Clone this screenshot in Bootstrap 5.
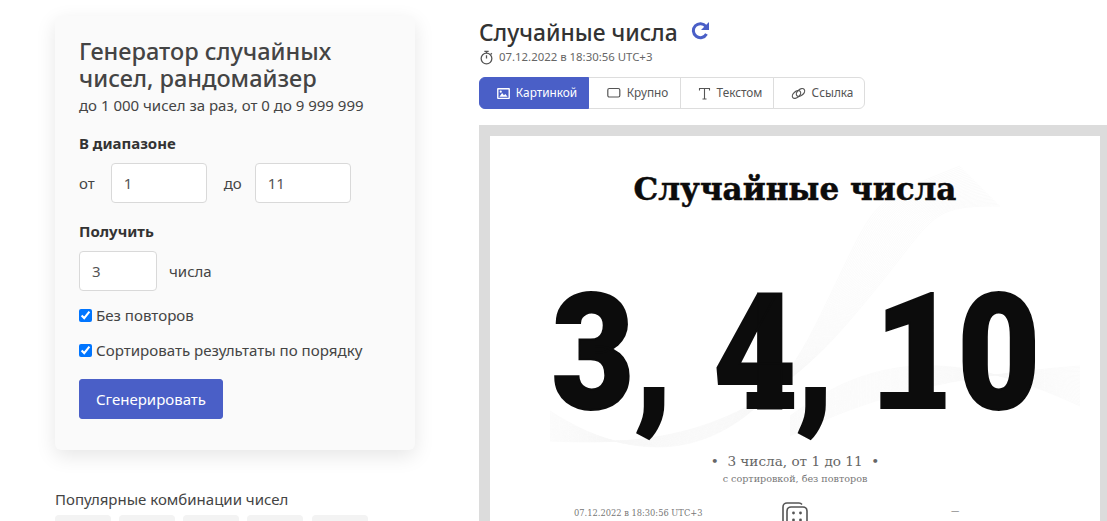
<!DOCTYPE html>
<html lang="ru">
<head>
    <meta charset="UTF-8">
    <meta name="viewport" content="width=device-width, initial-scale=1.0">
    <title>Случайные числа</title>
    <link href="https://cdn.jsdelivr.net/npm/bootstrap@5.3.0/dist/css/bootstrap.min.css" rel="stylesheet">
    <style>
        html, body {
            height: 521px;
            overflow: hidden;
        }
        body {
            font-family: "Noto Sans", sans-serif;
            font-size: 15px;
            color: #444;
            background: #fff;
        }
        .page-wrap {
            display: flex;
            padding: 16px 0 0 55px;
        }
        .side-col {
            width: 360px;
            flex: none;
        }
        .main-col {
            width: 628px;
            flex: none;
            margin-left: 64px;
            padding-top: 2px;
        }
        .gen-box {
            background: #fafafa;
            border: 0;
            border-radius: 6px;
            padding: 22px 24px 24px;
            height: 434px;
            box-shadow: 0 6px 20px rgba(0, 0, 0, .1);
        }
        .gen-title {
            font-size: 23.5px;
            line-height: 27px;
            font-weight: 500;
            color: #444;
            margin: 0;
        }
        .gen-sub {
            font-size: 15px;
            line-height: 22px;
            margin: 2px 0 16px;
        }
        .gen-label {
            font-size: 15px;
            line-height: 22px;
            font-weight: 700;
            color: #333;
            margin-bottom: 9px;
        }
        .gen-row {
            margin-bottom: 17px;
        }
        .gen-input {
            height: 40px;
            padding: 0 12px;
            font-size: 15px;
            color: #555;
            border: 1px solid #d9d9d9;
            border-radius: 4px;
            background: #fff;
        }
        .w-range { width: 96px; }
        .w-count { width: 78px; }
        .gap-do { margin: 0 13px 0 17px; }
        .gen-check {
            display: flex;
            align-items: center;
            gap: 4px;
            line-height: 22px;
            font-size: 15.1px;
        }
        .gen-check input {
            width: 13px;
            height: 13px;
            margin: 0;
        }
        .check-first { margin-top: 13px; }
        .check-second { margin-top: 13px; }
        .gen-btn {
            background: #4a5fc7;
            border-color: #4a5fc7;
            color: #fff;
            font-size: 15px;
            height: 40px;
            width: 144px;
            padding: 0;
            margin-top: 18px;
            border-radius: 3px;
        }
        .combo-title {
            font-size: 15px;
            line-height: 22px;
            margin: 38px 0 5px;
        }
        .combo-chip {
            display: block;
            width: 56px;
            height: 30px;
            background: #f3f3f3;
            border-radius: 4px;
        }
        .combo-chip:last-child { margin-left: 1px; }
        .res-title {
            font-size: 22.8px;
            line-height: 30px;
            font-weight: 500;
            color: #333;
            margin: 0;
        }
        .res-reload { margin-left: 12px; margin-top: -4px; }
        .res-time {
            font-size: 11.4px;
            line-height: 16px;
            color: #666;
            margin-top: 1px;
        }
        .res-time span { margin-left: 1px; }
        .tab-group { margin-top: 12px; }
        .tab-group .btn {
            height: 32px;
            padding: 0 0 0 6px;
            font-size: 11.8px;
            color: #555;
            background: #fff;
            border-color: #ddd;
            display: flex;
            align-items: center;
            justify-content: center;
            gap: 6px;
        }
        .tab-group .btn.active {
            background: #4a5fc7;
            border-color: #4a5fc7;
            color: #fff;
        }
        .tab-1 { width: 110px; }
        .tab-2 { width: 93px; }
        .tab-3 { width: 94px; }
        .tab-4 { width: 92px; }
        .pic-frame {
            background: #dcdcdc;
            padding: 11px 7px 0 11px;
            height: 396px;
            margin-top: 16px;
        }
        .pic-sheet {
            position: relative;
            background: #fff;
            height: 385px;
            overflow: hidden;
            text-align: center;
            font-family: "DejaVu Serif", "Liberation Serif", serif;
        }
        .pic-waves {
            position: absolute;
            left: 0;
            top: 0;
        }
        .pic-title, .pic-nums, .pic-meta, .pic-sub, .pic-foot {
            position: relative;
        }
        .pic-title {
            font-size: 31px;
            line-height: 40px;
            font-weight: 700;
            color: #0c0c0c;
            padding-top: 33px;
            height: 73px;
            -webkit-text-stroke: .5px #0c0c0c;
        }
        .pic-nums {
            font-family: Roboto, "Liberation Sans", sans-serif;
            font-size: 162px;
            line-height: 200px;
            font-weight: 900;
            color: #0c0c0c;
            margin-top: 44px;
            height: 198px;
            padding-left: 2px;
            white-space: nowrap;
            -webkit-text-stroke: 2px #0c0c0c;
            transform: scaleX(.88);
        }
        .num-gap { margin-right: 46px; }
        /* slab feet that Roboto's 1 and 4 lack */
        .num-slab {
            position: relative;
            display: inline-block;
        }
        .num-slab::after {
            content: "";
            position: absolute;
            bottom: 44px;
            height: 17px;
            background: #0c0c0c;
        }
        .slab-four::after { left: 38px; width: 54px; }
        .slab-one::after { left: 6px; width: 74px; }
        .pic-meta {
            font-size: 13.6px;
            line-height: 20px;
            color: #666;
        }
        .pic-sub {
            font-size: 9.6px;
            line-height: 16px;
            color: #777;
        }
        .pic-foot {
            display: flex;
            padding: 14px 0 0 84px;
            font-size: 8.3px;
            color: #777;
            line-height: 14px;
        }
        .foot-side { width: 207px; padding-top: 5px; text-align: left; white-space: nowrap; }
        .foot-dash { margin: 3px 0 0 142px; }
    </style>
</head>
<body>
    <div class="page-wrap">
        <div class="side-col">
            <form class="card gen-box">
                <h1 class="gen-title">Генератор случайных чисел, рандомайзер</h1>
                <p class="gen-sub">до 1 000 чисел за раз, от 0 до 9 999 999</p>

                <div class="gen-label">В диапазоне</div>
                <div class="d-flex align-items-center gen-row">
                    <span>от</span>
                    <input class="gen-input w-range ms-3" value="1">
                    <span class="gap-do">до</span>
                    <input class="gen-input w-range" value="11">
                </div>

                <div class="gen-label">Получить</div>
                <div class="d-flex align-items-center">
                    <input class="gen-input w-count" value="3">
                    <span class="ms-2 ps-1">числа</span>
                </div>

                <label class="gen-check check-first"><input type="checkbox" checked>Без повторов</label>
                <label class="gen-check check-second"><input type="checkbox" checked>Сортировать результаты по порядку</label>

                <button type="button" class="btn gen-btn">Сгенерировать</button>
            </form>

            <div class="combo-title">Популярные комбинации чисел</div>
            <div class="d-flex gap-2">
                <span class="combo-chip"></span>
                <span class="combo-chip"></span>
                <span class="combo-chip"></span>
                <span class="combo-chip"></span>
                <span class="combo-chip"></span>
            </div>
        </div>

        <div class="main-col">
            <div class="d-flex align-items-center">
                <h2 class="res-title">Случайные числа</h2>
                <svg class="res-reload" width="22" height="22" viewBox="0 0 22 22" fill="none">
                    <path d="M16.500 14a7 7 0 1 1-.6-7.600" stroke="#4a5fc7" stroke-width="3"/>
                    <path d="M19 2v8h-8z" fill="#4a5fc7"/>
                </svg>
            </div>
            <div class="res-time d-flex align-items-center gap-1">
                <svg width="15" height="15" viewBox="0 0 14 14" fill="none" stroke="#555" stroke-width="1.2">
                    <circle cx="7" cy="8" r="5"/>
                    <path d="M7 8V5M5 1.200h4M7 1.200V3M11 3l1 1"/>
                </svg>
                <span>07.12.2022 в 18:30:56 UTC+3</span>
            </div>

            <div class="btn-group tab-group" role="group">
                <button type="button" class="btn tab-1 active">
                    <svg width="13" height="11" viewBox="0 0 14 12"><path fill="#fff" fill-rule="evenodd" d="M1 0h12a1 1 0 0 1 1 1v10a1 1 0 0 1-1 1H1a1 1 0 0 1-1-1V1a1 1 0 0 1 1-1zm.5 1.500v9h11v-9zM2.500 9.500l3-4 2 2.500 1.500-1.500 2.500 3zM4 2.800a1.200 1.200 0 1 0 0 2.400 1.200 1.200 0 0 0 0-2.400z"/></svg>
                    Картинкой
                </button>
                <button type="button" class="btn tab-2">
                    <svg width="14" height="12" viewBox="0 0 14 12" fill="none" stroke="#555" stroke-width="1.200"><rect x=".8" y="1.500" width="12" height="8.500" rx="1.500"/></svg>
                    Крупно
                </button>
                <button type="button" class="btn tab-3">
                    <svg width="13" height="13" viewBox="0 0 13 13" fill="none" stroke="#555" stroke-width="1.100"><path d="M1.500 3.500V1.500h10v2M6.500 1.500v10.500M4.500 12h4"/></svg>
                    Текстом
                </button>
                <button type="button" class="btn tab-4">
                    <svg width="15" height="13" viewBox="0 0 15 13" fill="none" stroke="#555" stroke-width="1.200"><ellipse cx="5.500" cy="7.500" rx="4.800" ry="3" transform="rotate(-40 5.500 7.500)"/><ellipse cx="9.500" cy="5.500" rx="4.800" ry="3" transform="rotate(-40 9.500 5.500)"/></svg>
                    Ссылка
                </button>
            </div>

            <div class="pic-frame">
                <div class="pic-sheet">
                    <svg id="waves" class="pic-waves" width="610" height="385" viewBox="0 0 610 385"></svg>
                    <div class="pic-title">Случайные числа</div>
                    <div class="pic-nums"><span class="num-gap">3,</span><span class="num-slab slab-four">4</span><span class="num-gap">,</span><span class="num-slab slab-one">1</span>0</div>
                    <div class="pic-meta">•&nbsp; 3 числа, от 1 до 11 &nbsp;•</div>
                    <div class="pic-sub">с сортировкой, без повторов</div>
                    <div class="pic-foot">
                        <span class="foot-side">07.12.2022 в 18:30:56 UTC+3</span>
                        <svg width="28" height="28" viewBox="0 0 28 28" fill="none" stroke="#555" stroke-width="1.600">
                            <path d="M2 20V6a4 4 0 0 1 4-4h12a4 4 0 0 1 3 1.500"/>
                            <rect x="6" y="6" width="20" height="20" rx="4"/>
                            <g fill="#555" stroke="none"><circle cx="12.500" cy="12" r="1.400"/><circle cx="19.500" cy="12" r="1.400"/><circle cx="12.500" cy="19" r="1.400"/><circle cx="19.500" cy="19" r="1.400"/></g>
                        </svg>
                        <span class="foot-dash">—</span>
                    </div>
                </div>
            </div>
        </div>
    </div>

    <script src="https://cdn.jsdelivr.net/npm/bootstrap@5.3.0/dist/js/bootstrap.bundle.min.js"></script>
    <script>
        // faint guilloche lines behind the picture text
        const svg = document.getElementById('waves');
        let lines = '';
        for (let i = 0; i < 30; i++) {
            const t = i / 29;
            lines += `<path d="M60 ${275 + t * 30} C 160 ${340 - t * 30}, 260 ${320 - t * 20}, ${325 + t * 30} 190 S ${370 + t * 60} 70, ${470 + t * 40} ${30 + t * 40}"/>`;
            lines += `<path d="M300 ${300 - t * 20} C 380 ${260 - t * 40}, 460 ${240 - t * 30}, 590 ${230 + t * 40}"/>`;
        }
        svg.innerHTML = `<g fill="none" stroke="#f7f7f7" stroke-width=".5">${lines}</g>`;
    </script>
</body>
</html>
